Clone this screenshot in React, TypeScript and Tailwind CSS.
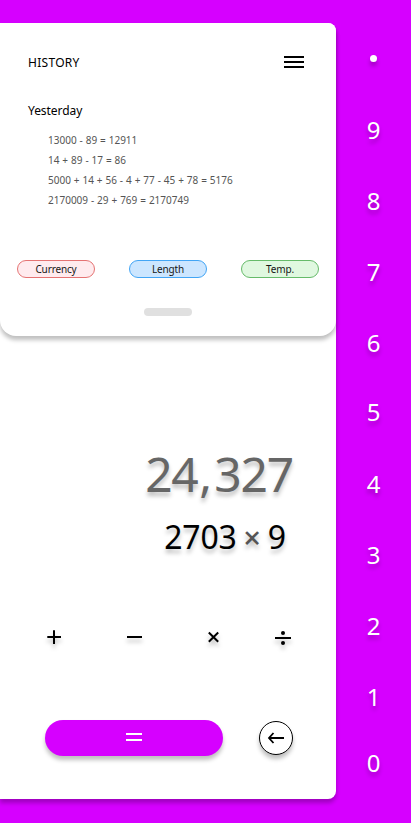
import React from "react";

const history = [
  "13000 - 89 = 12911",
  "14 + 89 - 17 = 86",
  "5000 + 14 + 56 - 4 + 77 - 45 + 78 = 5176",
  "2170009 - 29 + 769 = 2170749",
];

const converters = [
  { label: "Currency", tone: "border-[#e57373] bg-[#ffebee]" },
  { label: "Length", tone: "border-[#42a5f5] bg-[#cce6ff]" },
  { label: "Temp.", tone: "border-[#66bb6a] bg-[#e0f8e0]" },
];

const digits = [
  { value: "9", height: "h-[71px]" },
  { value: "8", height: "h-[71px]" },
  { value: "7", height: "h-[71px]" },
  { value: "6", height: "h-[69px]" },
  { value: "5", height: "h-[72px]" },
  { value: "4", height: "h-[71px]" },
  { value: "3", height: "h-[71px]" },
  { value: "2", height: "h-[71px]" },
  { value: "1", height: "h-[66px]" },
  { value: "0", height: "h-[24px]" },
];

const iconShadow = "block overflow-visible drop-shadow-[0_4px_2px_rgba(0,0,0,0.25)]";

function Operator({ label, children }: { label: string; children: React.ReactNode }) {
  return (
    <button aria-label={label} className="h-5 w-5">
      <svg width="20" height="20" viewBox="0 0 20 20" fill="none" stroke="#000" strokeWidth="2" className={iconShadow}>
        {children}
      </svg>
    </button>
  );
}

function HistoryPanel() {
  return (
    <section className="h-[313px] rounded-tr-lg rounded-b-[16px] bg-white shadow-[0_4px_4px_rgba(0,0,0,0.25)]">
      <header className="flex h-[78px] items-center justify-between pr-8 pl-7">
        <h1 className="mt-[2px] text-[12px] leading-4 tracking-[0.3px] text-black">HISTORY</h1>
        <button aria-label="Menu" className="flex w-5 flex-col gap-[3px]">
          <span className="h-[2px] bg-black" />
          <span className="h-[2px] bg-black" />
          <span className="h-[2px] bg-black" />
        </button>
      </header>
      <h2 className="mt-[2px] pl-7 text-[12px] leading-4 tracking-[-0.05px] text-black">Yesterday</h2>
      <ul className="mt-[11px] h-20 pl-12 text-[10px] leading-5 text-[#555] [word-spacing:0.33px]">
        {history.map((entry) => (
          <li key={entry} className="whitespace-nowrap">{entry}</li>
        ))}
      </ul>
      <div className="mt-[50px] flex gap-[34px] pl-[17px]">
        {converters.map(({ label, tone }) => (
          <button key={label} className={`h-[18px] w-[78px] rounded-full border text-center text-[10px] leading-4 tracking-[-0.15px] text-[#161616] ${tone}`}>
            {label}
          </button>
        ))}
      </div>
      <div className="mx-auto mt-[30px] h-2 w-12 rounded-full bg-[#e0e0e0]" />
    </section>
  );
}

export default function App() {
  return (
    <div className="flex h-[823px] w-[411px] overflow-hidden bg-[#d600ff] pt-[23px] font-['Noto_Sans',sans-serif]">
      <main className="h-[776px] w-[336px] rounded-r-lg bg-white shadow-[0_4px_4px_rgba(0,0,0,0.25)]">
        <HistoryPanel />
        <div className="mt-[108px] flex h-[60px] justify-end pr-[43px] text-[48px] leading-[60px] text-[#666] [text-shadow:0_4px_4px_rgba(0,0,0,0.25)]">
          <span className="tracking-[-1.4px]">24</span>
          <span className="mr-[2px] ml-[2px]">,</span>
          <span className="tracking-[-1.2px]">327</span>
        </div>
        <div className="mt-[13px] flex h-10 justify-end pr-[50px] text-[32px] leading-10 text-black [text-shadow:0_4px_4px_rgba(0,0,0,0.25)]">
          <span className="tracking-[-0.2px]">2703</span>
          <span className="w-[31px] text-center text-[31px] font-medium text-[#555]">×</span>
          <span>9</span>
        </div>
        <div className="mt-[70px] flex pl-11">
          <Operator label="Add"><path d="M3.3 10H17M10 3.3V17" /></Operator>
          <div className="ml-[60px]"><Operator label="Subtract"><path d="M3 10H18" /></Operator></div>
          <div className="ml-[60px]"><Operator label="Multiply"><path d="M4.8 5.5L14.2 14.7M14.2 5.5L4.8 14.7" /></Operator></div>
          <div className="ml-[49px]">
            <Operator label="Divide">
              <path d="M2 11H18" />
              <circle cx="10" cy="6" r="2" fill="#000" stroke="none" />
              <circle cx="10" cy="16" r="2" fill="#000" stroke="none" />
            </Operator>
          </div>
        </div>
        <div className="mt-[67px] flex items-center gap-9 pl-[45px]">
          <button aria-label="Equals" className="flex h-9 w-[178px] flex-col items-center justify-center gap-1 rounded-full bg-[#d600ff] pr-px pb-[2px] shadow-[0_4px_4px_rgba(0,0,0,0.25)]">
            <span className="h-[2px] w-4 bg-white" />
            <span className="h-[2px] w-4 bg-white" />
          </button>
          <button aria-label="Backspace" className="flex h-[34px] w-[34px] items-center justify-center rounded-full border border-black bg-white shadow-[0_4px_4px_rgba(0,0,0,0.25)]">
            <svg width="18" height="12" viewBox="0 0 18 12" fill="none" stroke="#000" strokeWidth="1.8" className="block">
              <path d="M17 6H2.5M6.5 1L2 6L6.5 11" />
            </svg>
          </button>
        </div>
      </main>
      <nav className="flex w-[75px] flex-col items-center text-[24px] leading-6 text-white [text-shadow:0_4px_4px_rgba(0,0,0,0.25)]">
        <button aria-label="Decimal point" className="mt-8 mb-[56px] h-[7px] w-[7px] shrink-0 rounded-full bg-white shadow-[0_4px_4px_rgba(0,0,0,0.25)]" />
        {digits.map(({ value, height }) => (
          <button key={value} className={`flex shrink-0 items-start [text-shadow:inherit] ${height}`}>{value}</button>
        ))}
      </nav>
    </div>
  );
}
